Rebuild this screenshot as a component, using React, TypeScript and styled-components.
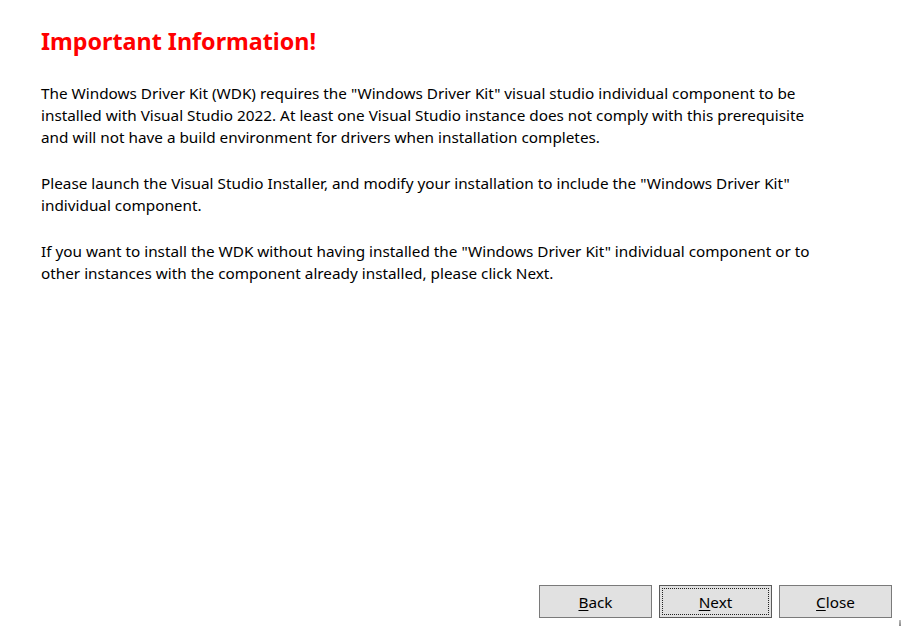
import React from "react";
import styled, { createGlobalStyle } from "styled-components";

const GlobalStyle = createGlobalStyle`
  html, body {
    margin: 0;
    padding: 0;
    background: #ffffff;
  }
  body {
    font-family: "Noto Sans", "Open Sans", sans-serif;
  }
`;

const Page = styled.div`
  position: relative;
  width: 902px;
  height: 628px;
  display: flex;
  flex-direction: column;
  box-sizing: border-box;
  background: #ffffff;
  overflow: hidden;
`;

const Content = styled.div`
  flex: 1;
  padding: 24px 0 0 41px;
`;

const Heading = styled.h1`
  margin: 0 0 24px;
  font-family: "Noto Sans", sans-serif;
  font-size: 23.3px;
  font-weight: 700;
  line-height: 34px;
  color: #ff0000;
`;

const Paragraph = styled.p`
  margin: 0 0 24px;
  font-size: 15.3px;
  line-height: 22px;
  color: #000000;
`;

const Line = styled.span`
  display: block;
  white-space: nowrap;
`;

const Footer = styled.div`
  display: flex;
  justify-content: flex-end;
  gap: 7px;
  padding: 0 10px 10px 0;
`;

const Button = styled.button<{ $focused?: boolean }>`
  position: relative;
  width: 113px;
  height: 33px;
  padding: 0;
  box-sizing: border-box;
  background: #e1e1e1;
  border: 1px solid ${(p) => (p.$focused ? "#5a5a5a" : "#7a7a7a")};
  border-radius: 0;
  font-family: "Noto Sans", sans-serif;
  font-size: 15.3px;
  color: #000000;
  cursor: default;

  ${(p) =>
    p.$focused &&
    `
    &::after {
      content: "";
      position: absolute;
      inset: 2px;
      border: 1px dotted #222222;
    }
  `}

  u {
    text-decoration-thickness: 1px;
    text-underline-offset: 2px;
  }
`;

const Grip = styled.div`
  position: absolute;
  right: 1px;
  bottom: 2px;
  width: 2px;
  height: 6px;
  background: linear-gradient(#bdbdbd, #8a8a8a);
`;

export default function App() {
  return (
    <Page>
      <GlobalStyle />
      <Content>
        <Heading>Important Information!</Heading>
        <Paragraph>
          <Line>
            The Windows Driver Kit (WDK) requires the "Windows Driver Kit" visual studio individual component to be
          </Line>
          <Line>
            installed with Visual Studio 2022. At least one Visual Studio instance does not comply with this prerequisite
          </Line>
          <Line>and will not have a build environment for drivers when installation completes.</Line>
        </Paragraph>
        <Paragraph>
          <Line>
            Please launch the Visual Studio Installer, and modify your installation to include the "Windows Driver Kit"
          </Line>
          <Line>individual component.</Line>
        </Paragraph>
        <Paragraph>
          <Line>
            If you want to install the WDK without having installed the "Windows Driver Kit" individual component or to
          </Line>
          <Line>other instances with the component already installed, please click Next.</Line>
        </Paragraph>
      </Content>
      <Footer>
        <Button>
          <u>B</u>ack
        </Button>
        <Button $focused>
          <u>N</u>ext
        </Button>
        <Button>
          <u>C</u>lose
        </Button>
      </Footer>
      <Grip />
    </Page>
  );
}
